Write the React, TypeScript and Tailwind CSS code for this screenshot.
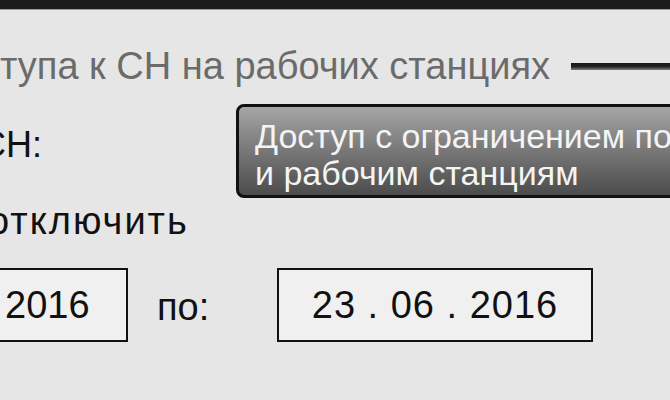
export default function App() {
  return (
    <div className="w-[670px] h-[400px] overflow-hidden bg-[#e6e6e6] font-['Liberation_Sans',Arial,sans-serif] text-[#111]">
      {/* top bar */}
      <div className="h-[10px] bg-[#1c1c1c] border-b border-[#9c9c9c]" />

      {/* group title */}
      <div className="mt-[37px] flex items-center h-[38px]">
        <span className="text-[38px] leading-none text-[#6b6b6b] whitespace-nowrap">
          тупа к СН на рабочих станциях
        </span>
        <div className="ml-[21px] flex-1 h-[7px] bg-gradient-to-b from-[#151515] via-[#222] to-[#808080]" />
      </div>

      {/* access mode */}
      <div className="mt-[19px] flex">
        <div className="w-[236px] shrink-0 pt-[23px]">
          <span className="block -ml-[20px] text-[36px] leading-none whitespace-nowrap">СН:</span>
        </div>
        <div className="w-[460px] h-[94px] shrink-0 rounded-l-[8px] border-[3px] border-[#111] bg-gradient-to-b from-[#a6a6a6] to-[#4c4c4c] pl-[16px] pt-[11px]">
          <p className="text-[34px] leading-[37px] text-[#f4f4f4] whitespace-nowrap">
            Доступ с ограничением по
            <br />
            и рабочим станциям
          </p>
        </div>
      </div>

      <div className="mt-[4px] text-[38px] leading-none tracking-[2px] whitespace-nowrap -ml-[12px]">
        отключить
      </div>

      {/* period */}
      <div className="mt-[28px] flex items-center">
        <div className="-ml-[2px] w-[130px] h-[74px] shrink-0 border-2 border-[#111] bg-[#f0f0f0] flex items-center pl-[5px]">
          <span className="text-[38px] leading-none">2016</span>
        </div>
        <div className="w-[149px] shrink-0 pl-[29px] text-[38px] leading-none pt-[4px]">по:</div>
        <div className="w-[316px] h-[74px] shrink-0 border-2 border-[#111] bg-[#f0f0f0] flex items-center justify-center">
          <span className="text-[38px] leading-none tracking-[1px]">23 . 06 . 2016</span>
        </div>
      </div>
    </div>
  );
}
